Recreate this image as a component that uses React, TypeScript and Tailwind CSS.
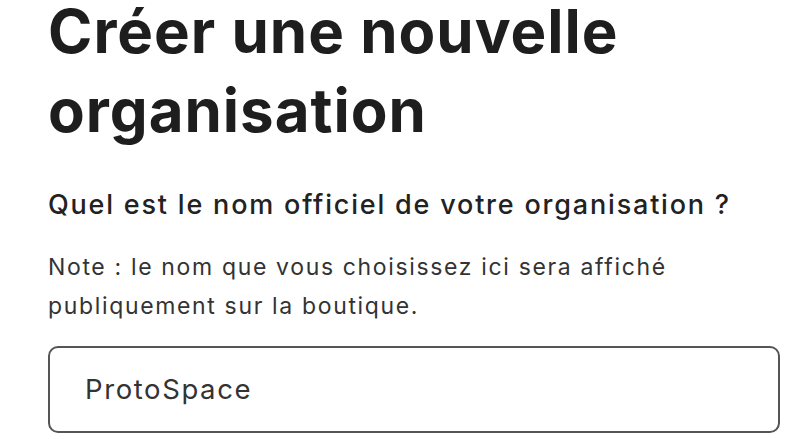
export default function App() {
    return (
        <div className="min-h-screen bg-white px-12 font-['Inter',sans-serif] text-[#1e1e1e]">
            <h1 className="text-[60px] font-bold leading-[62px] tracking-[1px]">
                <span className="block">Créer une nouvelle</span>
                <span className="block mt-[17px]">organisation</span>
            </h1>
            <h2 className="mt-[48px] text-[27px] font-medium leading-[32px] tracking-[1.8px] text-[#222] whitespace-nowrap">
                Quel est le nom officiel de votre organisation ?
            </h2>
            <p className="mt-[27px] text-[23px] leading-[39px] tracking-[1.65px] text-[#333]">
                Note : le nom que vous choisissez ici sera affiché publiquement sur la boutique.
            </p>
            <div className="mt-[20px] w-[732px] h-[87px] rounded-[10px] border-2 border-[#555] flex items-center px-[35px]">
                <span className="text-[27.5px] tracking-[1.6px] text-[#333]">ProtoSpace</span>
            </div>
        </div>
    );
}
